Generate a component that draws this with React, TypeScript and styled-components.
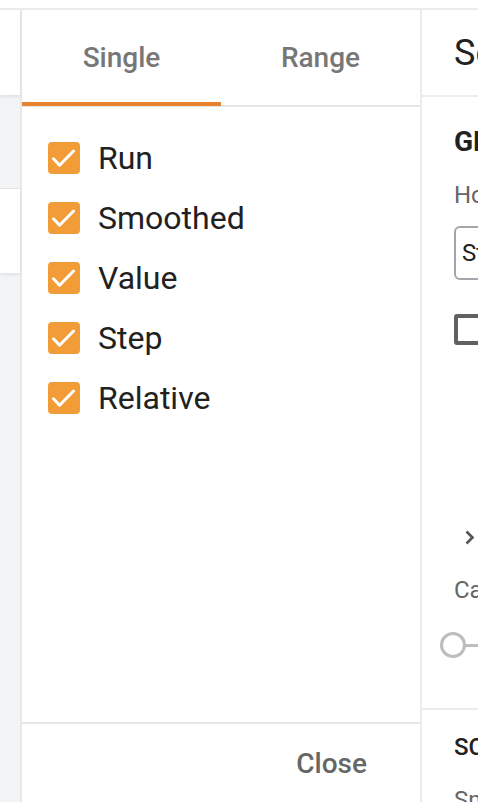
import styled, { createGlobalStyle } from "styled-components";
import { useState } from "react";

const GlobalStyle = createGlobalStyle`
  html, body {
    margin: 0;
    padding: 0;
    background: #ffffff;
    overflow: hidden;
  }
  body {
    font-family: Roboto, "Liberation Sans", sans-serif;
    color: #212121;
  }
`;

const Page = styled.div`
  display: flex;
  flex-direction: column;
  width: 478px;
  height: 802px;
  overflow: hidden;
`;

const TopStrip = styled.div`
  height: 8px;
  flex-shrink: 0;
  border-bottom: 2px solid #ebebeb;
`;

const Columns = styled.div`
  display: flex;
  flex: 1;
  min-height: 0;
`;

/* ************************  left rail (page behind) ******************************* */
const LeftRail = styled.div`
  width: 20px;
  flex-shrink: 0;
  display: flex;
  flex-direction: column;
  background: #f3f4f6;
  border-right: 2px solid #e8e8e8;
`;

const RailCard = styled.div<{ $top: number }>`
  height: ${(p) => (p.$top === 0 ? "85px" : "84px")};
  margin-top: ${(p) => p.$top}px;
  background: #ffffff;
  border-top: ${(p) => (p.$top ? "1px solid #e3e3e3" : "none")};
  box-shadow: 0 2px 3px rgba(0, 0, 0, 0.08);
`;

/* ************************  middle panel ****************************************** */
const Panel = styled.div`
  width: 398px;
  flex-shrink: 0;
  display: flex;
  flex-direction: column;
  background: #ffffff;
`;

const TabBar = styled.div`
  display: flex;
  height: 95px;
  border-bottom: 2px solid #e6e6e6;
`;

const Tab = styled.button<{ $active: boolean }>`
  position: relative;
  flex: 1;
  border: none;
  background: none;
  padding: 0;
  font-family: Roboto, "Liberation Sans", sans-serif;
  font-size: 28px;
  font-weight: 500;
  color: #777777;
  cursor: pointer;

  &::after {
    content: "";
    display: ${(p) => (p.$active ? "block" : "none")};
    position: absolute;
    left: 0;
    right: 0;
    bottom: -1px;
    height: 4px;
    background: #e8822f;
  }
`;

const CheckList = styled.div`
  flex: 1;
  padding: 21px 0 0 26px;
`;

const CheckRow = styled.label`
  display: flex;
  align-items: center;
  gap: 18px;
  height: 60px;
  font-size: 32px;
  color: #212121;
  cursor: pointer;
`;

const CheckBox = styled.span<{ $checked: boolean }>`
  display: flex;
  align-items: center;
  justify-content: center;
  width: 32px;
  height: 32px;
  border-radius: 4px;
  background: ${(p) => (p.$checked ? "#f29c38" : "#ffffff")};
  box-sizing: border-box;
  border: ${(p) => (p.$checked ? "none" : "3px solid #616161")};
`;

const Footer = styled.div`
  height: 78px;
  flex-shrink: 0;
  display: flex;
  align-items: center;
  justify-content: flex-end;
  padding-right: 53px;
  border-top: 2px solid #e6e6e6;
`;

const TextButton = styled.button`
  border: none;
  background: none;
  padding: 0;
  font-family: Roboto, "Liberation Sans", sans-serif;
  font-size: 28px;
  font-weight: 500;
  color: #666666;
  cursor: pointer;
`;

/* ************************  right settings panel ********************************** */
const Settings = styled.div`
  flex: 1;
  min-width: 0;
  display: flex;
  flex-direction: column;
  border-left: 2px solid #ececec;
`;

const SettingsHeader = styled.div`
  height: 85px;
  flex-shrink: 0;
  display: flex;
  align-items: center;
  padding-left: 32px;
  border-bottom: 2px solid #ececec;
  font-size: 36px;
  color: #212121;
  white-space: nowrap;
`;

const Section = styled.div<{ $pad: number }>`
  display: flex;
  flex-direction: column;
  align-items: flex-start;
  padding: ${(p) => p.$pad}px 0 0 32px;
  white-space: nowrap;
  & + & {
    border-top: 2px solid #ececec;
  }
`;

const SectionTitle = styled.div<{ $size: number; $weight: number }>`
  font-size: ${(p) => p.$size}px;
  font-weight: ${(p) => p.$weight};
  line-height: ${(p) => p.$size + 6}px;
  color: #212121;
`;

const FieldLabel = styled.div<{ $gap: number }>`
  margin-top: ${(p) => p.$gap}px;
  font-size: 24px;
  line-height: 28px;
  color: #666666;
`;

const Select = styled.div`
  margin-top: 17px;
  box-sizing: border-box;
  width: 300px;
  height: 54px;
  display: flex;
  align-items: center;
  padding-left: 6px;
  border: 2px solid #a3a7ab;
  border-radius: 6px;
  font-size: 24px;
  color: #212121;
`;

const OptionRow = styled.div`
  margin-top: 34px;
  display: flex;
  align-items: flex-start;
  gap: 18px;
  font-size: 24px;
  color: #212121;
`;

const EmptyBox = styled.span`
  width: 31px;
  height: 31px;
  flex-shrink: 0;
  box-sizing: border-box;
  border: 4px solid #616161;
  border-radius: 3px;
`;

const Expander = styled.div`
  margin: 178px 0 0 11px;
  display: flex;
  align-items: center;
  gap: 20px;
  font-size: 24px;
`;

const SliderRow = styled.div`
  position: relative;
  margin: 29px 0 51px 0;
  width: 300px;
  height: 24px;
  display: flex;
  align-items: center;
`;

const Track = styled.div`
  flex: 1;
  height: 3px;
  background: #bdbdbd;
`;

const Thumb = styled.span`
  position: absolute;
  left: -14px;
  top: -1px;
  width: 26px;
  height: 26px;
  box-sizing: border-box;
  border: 3.5px solid #bdbdbd;
  border-radius: 50%;
  background: #ffffff;
`;

const CheckMark = () => (
  <svg width="32" height="32" viewBox="0 0 32 32" fill="none">
    <path d="M5.5 16.8 L11.6 23.2 L25.6 9" stroke="#ffffff" strokeWidth="3" strokeLinecap="round" strokeLinejoin="round" />
  </svg>
);

const Chevron = () => (
  <svg width="10" height="15" viewBox="0 0 10 15" fill="none">
    <path d="M1.5 1.5 L7.5 7.5 L1.5 13.5" stroke="#555555" strokeWidth="2.6" />
  </svg>
);

const COLUMNS = ["Run", "Smoothed", "Value", "Step", "Relative"];

export default function App() {
  const [tab, setTab] = useState<"single" | "range">("single");
  const [checked, setChecked] = useState<Record<string, boolean>>(
    Object.fromEntries(COLUMNS.map((c) => [c, true]))
  );

  return (
    <Page>
      <GlobalStyle />
      <TopStrip />
      <Columns>
        <LeftRail>
          <RailCard $top={0} />
          <RailCard $top={93} />
        </LeftRail>

        <Panel>
          <TabBar>
            <Tab $active={tab === "single"} onClick={() => setTab("single")}>
              Single
            </Tab>
            <Tab $active={tab === "range"} onClick={() => setTab("range")}>
              Range
            </Tab>
          </TabBar>

          <CheckList>
            {COLUMNS.map((c) => (
              <CheckRow key={c} onClick={() => setChecked((s) => ({ ...s, [c]: !s[c] }))}>
                <CheckBox $checked={checked[c]}>{checked[c] && <CheckMark />}</CheckBox>
                {c}
              </CheckRow>
            ))}
          </CheckList>

          <Footer>
            <TextButton>Close</TextButton>
          </Footer>
        </Panel>

        <Settings>
          <SettingsHeader>Settings</SettingsHeader>
          <Section $pad={28}>
            <SectionTitle $size={28} $weight={700}>GENERAL</SectionTitle>
            <FieldLabel $gap={22}>Horizontal Axis</FieldLabel>
            <Select>Step</Select>
            <OptionRow>
              <EmptyBox />
              Enable step selection and data table
            </OptionRow>
            <Expander>
              <Chevron />
              Enable pinned cards
            </Expander>
            <FieldLabel $gap={25}>Card Width</FieldLabel>
            <SliderRow>
              <Track />
              <Thumb />
            </SliderRow>
          </Section>
          <Section $pad={22}>
            <SectionTitle $size={24} $weight={500}>SCALARS</SectionTitle>
            <FieldLabel $gap={24}>Smoothing</FieldLabel>
          </Section>
        </Settings>
      </Columns>
    </Page>
  );
}
